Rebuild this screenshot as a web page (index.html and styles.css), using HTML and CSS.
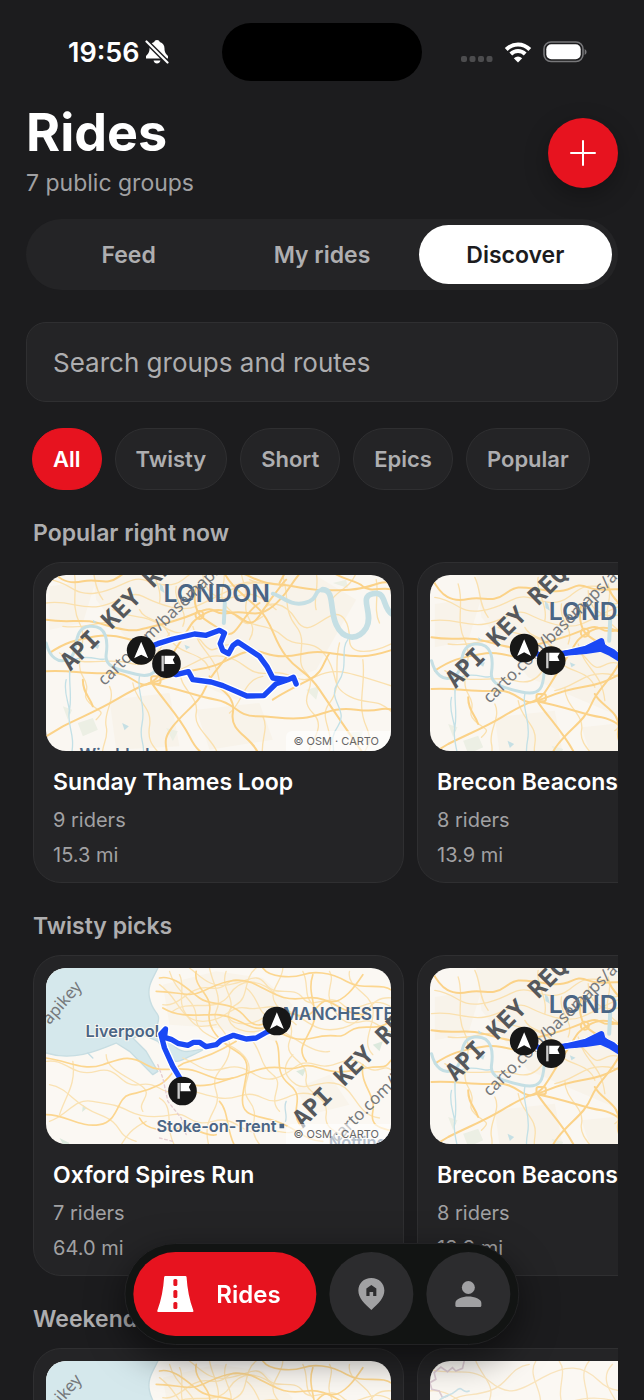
FILE: index.html
```html
<!DOCTYPE html>
<html lang="en">
<head>
<meta charset="utf-8">
<meta name="viewport" content="width=device-width, initial-scale=1">
<title>Rides</title>
<link rel="stylesheet" href="styles.css">
</head>
<body>
<svg class="sprite" aria-hidden="true">
  <defs>
    <g id="start-pin">
      <circle r="43" fill="#171717"/>
      <path d="M0-26 21 24 0 13-21 24Z" fill="#fff"/>
    </g>
    <g id="end-pin">
      <circle r="43" fill="#171717"/>
      <path d="M-15-24h7v47h-7Z" fill="#ccc"/>
      <path d="M-6-24H26L19-12 25 1H-6Z" fill="#fff"/>
    </g>
    <g id="watermark">
      <text class="wm-bold" transform="translate(122 336) rotate(-45)">API KEY REQUIRED</text>
      <text class="wm-thin" transform="translate(225 380) rotate(-44.5)">carto.com/basemaps/apikey</text>
    </g>
    <g id="london" fill="none" stroke-linecap="round" stroke-linejoin="round">
      <rect x="-100" y="-100" width="1400" height="800" fill="#faf7f2"/>
      <g fill="#f8f3ea">
        <path d="M180 -40 520 -60 780 0 980 120 860 330 620 420 340 300 200 120Z"/>
        <path d="M60 80 200 60 160 190 60 210ZM240 420 420 400 450 560 260 570ZM500 450 690 430 730 540 540 570Z"/>
      </g>
      <g fill="#ecefe4">
        <path d="M145 490 190 475 205 510 160 530ZM100 440 128 450 115 480ZM410 505 445 515 430 545ZM830 390 870 380 860 420ZM910 70 950 60 955 85ZM640 250 670 260 650 280ZM950 520 1000 515 990 550Z"/>
      </g>
      <g stroke="#fae0ae" stroke-width="4">
        <path d="M50 130C120 120 150 150 210 140S300 90 340 110 450 160 500 140 640 60 700 70"/>
        <path d="M60 60C130 70 130 110 200 100S300 50 340 60 420 90 460 60 500 20 580 30"/>
        <path d="M130 20C150 80 120 130 150 190S130 300 160 350 150 400 180 430 230 450 200 480"/>
        <path d="M240 380C260 420 220 460 230 500S210 560 220 600M310 370C320 430 370 440 360 500S390 570 400 600"/>
        <path d="M250 150C310 180 340 160 400 200S480 200 520 250 560 240 620 260"/>
        <path d="M420 340C480 330 510 280 580 290S650 350 720 340 800 380 860 350 960 340 1090 380"/>
        <path d="M600 460C640 430 640 360 700 350M450 330C450 390 510 410 500 460S560 540 570 600"/>
        <path d="M620 170C680 210 720 190 760 230S850 230 890 290 900 380 960 410 1040 410 1090 460"/>
        <path d="M690 170C710 110 770 130 800 180S860 190 900 170 960 190 960 240 1030 280 1090 250"/>
        <path d="M760 50C780 110 760 150 800 200S790 300 830 340 800 410 850 460 820 560 840 600"/>
        <path d="M580 20C600 70 550 110 600 150S640 210 700 170M520 40C520 90 560 130 620 110S700 120 740 150"/>
        <path d="M640 0C620 50 660 80 650 130S690 190 660 240M660 60C700 80 720 60 760 80M590 80C630 80 640 60 690 70"/>
        <path d="M930 250C910 320 940 380 900 430S930 520 890 600M980 40C960 90 920 90 900 130"/>
        <path d="M700 470C720 510 690 540 700 600M1000 300C1010 380 980 430 1010 500S990 560 1010 600"/>
        <path d="M100 200C180 210 210 180 250 190M90 280C160 330 230 290 300 310S390 270 420 220"/>
        <path d="M330 150C350 190 400 170 420 230S520 270 540 330M440 80C430 130 480 150 460 200M490 200C510 280 560 280 570 370"/>
        <path d="M180 0C200 40 190 80 220 120M370 0C360 40 400 80 390 130M860 40C870 80 850 120 860 150M1040 60C1050 100 1030 150 1050 190"/>
      </g>
      <g stroke="#fbd288" stroke-width="6">
        <path d="M50 0C80 60 110 75 160 65S230 80 270 50 320 30 400 40 470 10 520 30 600 20 660 50 740 70 790 80 880 95 960 90 1040 60 1090 70"/>
        <path d="M50 180C110 190 140 180 180 185S290 220 330 210 430 190 500 160 540 170 600 160 680 180 730 140 780 70 830 20"/>
        <path d="M50 335C120 330 180 345 240 340S320 380 350 375 430 340 500 330 590 300 640 280 700 290 760 290 830 270 900 280 1000 300 1090 270"/>
        <path d="M50 530 100 500C160 470 210 450 260 420S330 380 360 370 410 310 450 250 480 190 520 165 600 150 640 180 690 160 730 110 750 80 770 60"/>
        <path d="M370 375C400 420 450 470 480 530S520 570 530 600M360 370C460 390 500 410 560 420S620 470 680 470 760 480 820 475 900 440 980 450 1040 440 1090 450"/>
        <path d="M500 80C490 120 500 150 510 165S560 200 590 220 640 160 690 130M580 30C600 80 650 110 690 150S730 240 770 290 830 330 870 390 910 450 1000 580"/>
        <path d="M620 240C600 300 550 330 530 380S470 450 430 500 420 560 410 600M540 350C560 390 620 400 610 460S670 530 690 590"/>
        <path d="M60 280C120 240 150 240 200 230S300 240 340 250M160 360C160 400 180 410 190 440M750 70C760 50 780 20 790-20"/>
        <path d="M900 30C930 60 980 60 1000 80S1060 80 1090 90M730 420C760 400 800 380 840 360S880 310 900 280"/>
        <circle cx="510" cy="166" r="12"/><rect x="365" y="350" width="28" height="22" rx="6"/>
      </g>
      <g stroke="#c3e0e6" stroke-width="4">
        <path d="M128 300C110 340 130 400 120 450S140 520 125 590M330 350C320 400 350 430 338 490S350 540 340 600M955 240C930 270 960 320 925 370S960 450 925 500 930 560 900 600M110 360C100 400 120 430 120 460"/>
        <path d="M135 300C180 280 220 310 230 295"/>
      </g>
      <g stroke="#c5dfe4">
        <path stroke-width="9" d="M50 250C60 290 85 315 118 298S125 205 180 200 235 250 230 285 260 330 320 344 385 325 388 285"/>
        <path stroke-width="12" d="M583 190 586 130M730 102C760 110 780 140 825 130S850 92 880 90"/>
        <path stroke-width="17" d="M880 90C915 90 900 150 920 195S985 245 1010 205 985 110 1030 102 1055 145 1090 165"/>
      </g>
      <path fill="#c5dfe4" d="M278 490 298 500 285 512ZM465 255 482 262 470 270ZM190 258 210 255 205 268ZM190 180 202 188 192 190ZM390 70 400 80 405 100 392 92Z"/>
      <text class="city" x="402" y="128">LONDON</text>
      <text class="town" x="150" y="602">Wimbledon</text>
      <use href="#watermark"/>
    </g>
    <g id="north-west" fill="none" stroke-linecap="round" stroke-linejoin="round">
      <rect x="0" y="0" width="1200" height="700" fill="#fbf8f3"/>
      <g fill="#f9f4eb"><path d="M400 90 560 50 700 70 790 150 740 260 560 220 420 210ZM800 400 900 360 960 450 840 480Z"/></g>
      <path d="M0 0H400C385 60 350 80 360 130S395 170 385 205 400 240 430 270 480 290 510 285 490 300 460 315 430 310 410 290L385 260 340 240 310 250 350 290 385 350 370 360 300 290 260 265C200 290 130 320 50 295L0 300Z" fill="#d5e8ec" stroke="#c7dde2" stroke-width="4"/>
      <path d="M90 550 120 565 110 585ZM160 450 172 460 158 472ZM800 350 830 340 820 365ZM1030 270 1060 260 1050 290Z" fill="#dce9dd"/>
      <g stroke="#fae2b3" stroke-width="4">
        <path d="M390 90C450 130 450 200 520 200S600 150 650 160 720 140 780 170 860 240 940 220 1010 120 1090 130"/>
        <path d="M420 50C440 120 500 130 500 190S590 250 640 300 620 390 660 440 640 520 700 580"/>
        <path d="M480 40C520 70 540 100 600 90S680 50 710 90 790 90 820 130 900 110 940 150 1020 110 1090 160"/>
        <path d="M540 40C550 90 580 130 560 170S610 230 600 290 540 350 560 410 510 480 540 580"/>
        <path d="M680 40C640 70 660 130 620 150S590 220 650 230 710 200 760 230 860 300 900 290"/>
        <path d="M760 40C760 80 710 110 740 150S800 210 780 260 840 320 830 370 900 420 890 480 960 530 970 580"/>
        <path d="M50 320C110 310 130 370 200 350S270 400 330 390 390 420 440 410 510 420 570 430 640 400 700 430 780 400 850 420"/>
        <path d="M60 500C120 480 130 430 190 440S260 450 300 470 380 490 430 480 480 520 550 500 630 540 690 530 770 550 820 520"/>
        <path d="M130 320C140 390 110 420 90 480M230 300C230 340 280 360 330 390S320 440 340 470M390 430C440 460 400 520 440 580"/>
        <path d="M460 310C510 330 520 360 590 340S680 390 740 370 800 310 860 330 950 290 1000 330 1060 320 1090 350"/>
        <path d="M900 50C920 80 880 110 910 160S960 210 1000 200 1070 240 1090 230M960 50C950 100 1020 110 1030 160S990 260 1030 300"/>
        <path d="M670 260C700 300 690 330 730 360S710 430 750 470M790 300C750 340 770 370 800 390S880 370 930 390 980 480 1050 490"/>
        <path d="M400 150C450 160 480 90 540 100S590 60 640 80M430 170C480 130 560 180 600 120S700 80 740 120"/>
        <path d="M60 390C120 400 130 450 210 480S250 540 320 560M350 500C310 520 290 540 270 580"/>
        <path d="M450 60C470 100 440 140 470 180S500 220 560 210M590 50C570 100 620 130 600 170S660 220 700 190M650 100C690 130 680 170 720 190S770 180 800 210M820 50C840 90 820 120 850 150"/>
      </g>
      <g stroke="#fcd68f" stroke-width="5">
        <path d="M390 70C430 60 470 100 510 130S600 130 650 190 740 160 800 180 860 130 900 140 980 90 1000 60"/>
        <path d="M400 160C450 190 500 180 560 180S660 230 700 220 770 270 850 250 920 260 960 230 1050 240 1090 190"/>
        <path d="M380 110C440 110 480 130 520 110S620 60 680 90 760 140 830 130 940 180 1000 180"/>
        <path d="M500 50C490 100 550 120 540 170S570 260 620 290 650 350 640 420 680 480 740 500 830 560 880 560"/>
        <path d="M50 310C120 320 160 350 220 330S300 300 350 330 440 330 500 350 560 380 610 370"/>
        <path d="M50 480C110 480 150 520 210 510S260 430 300 420 350 410 390 390 430 330 480 320 570 290 620 260"/>
        <path d="M480 390C540 400 570 380 610 370S700 330 760 340 810 320 870 340 950 350 1010 340 1060 350 1090 310"/>
        <path d="M740 260C760 300 730 350 780 390S780 460 810 510M850 60C830 120 870 160 850 210S800 280 830 320"/>
        <path d="M700 40C720 70 790 70 820 60S900 50 950 80 1060 80 1090 110M570 440C600 470 590 540 620 580"/>
        <path d="M1000 330C990 390 1040 420 1030 470S1060 520 1090 530M330 490C350 530 410 530 450 520S530 550 560 540"/>
      </g>
      <path d="M385 330 400 370 415 440 455 490 470 540M390 550 430 560" stroke="#e5cdd2" stroke-width="4" stroke-dasharray="8 8"/>
      <path d="M175 295 190 310M770 440C760 460 775 480 768 500" stroke="#c4dde5" stroke-width="4"/>
      <text class="town halo" x="168" y="247">Liverpool</text>
      <text class="town halo" x="381" y="532">Stoke-on-Trent</text>
      <path d="M750 507h14v14h-14Z" fill="#4a6585"/>
      <text class="city small" x="760" y="195">MANCHESTER</text>
      <text class="town halo" x="898" y="580">Nottingham</text>
      <use href="#watermark" x="698" y="186"/>
      <text class="wm-thin" transform="translate(60 212) rotate(-49)">apikey</text>
    </g>
    <g id="midlands" fill="none" stroke-linecap="round">
      <rect x="0" y="0" width="1200" height="700" fill="#fbf8f3"/>
      <g stroke="#f9e4bd" stroke-width="4">
        <path d="M50 60C120 90 180 50 240 100S330 130 400 90 520 50 570 100 690 130 760 90"/>
        <path d="M100 180C150 130 180 150 240 130S300 60 360 50M200 40C220 90 260 110 240 160S290 200 300 240"/>
        <path d="M380 40C350 90 410 130 390 190M450 40C480 80 430 130 470 190M540 40C500 90 550 130 530 190"/>
        <path d="M60 130C130 120 160 190 230 180S340 150 400 170 500 130 620 160M610 50C570 90 600 130 640 190"/>
      </g>
      <path d="M165 40 160 62 140 70 130 60 115 72 95 58 75 75 80 95 62 105 68 125 90 130 100 150 115 145" stroke="#dccbd3" stroke-width="5"/>
      <path d="M85 190C80 140 120 150 140 130S160 140 180 130" stroke="#cce2e8" stroke-width="5"/>
    </g>
    <g id="brecon-map">
      <use href="#london" x="17" y="53"/>
      <g class="route">
        <path class="casing" d="M345 263 400 290 470 280 530 268 575 248 582 265 610 277 640 300 700 320"/>
        <path class="line" d="M345 263 400 290 470 280 530 266 577 243 582 262 610 275 640 300 700 320"/>
        <path class="line" d="M470 280 530 275 575 268 605 282 650 310"/>
        <path class="line" d="M500 277 545 268 578 256 600 275"/>
      </g>
      <use href="#start-pin" x="345" y="265"/>
      <use href="#end-pin" x="426" y="303"/>
    </g>
  </defs>
</svg>

<div class="app">
  <div class="status">
    <div class="status-left">
      <span>19:56</span>
      <svg width="24" height="24" viewBox="0 0 24 24" role="img" aria-label="Silent">
        <path fill="#fff" d="M12 0c1.500 0 2.500.8 2.800 2 3.200 1 4.700 3.500 4.700 6.500 0 4 1.500 5.500 3.500 7.500v2.500H1V16c2-2 3.500-3.500 3.500-7.500 0-3 1.500-5.500 4.700-6.500C9.500.8 10.500 0 12 0ZM8.500 20.500h7c-.5 1.900-1.800 3-3.500 3s-3-1.100-3.500-3Z"/>
        <path d="M0 0 24 24" stroke="#1c1c1e" stroke-width="5"/>
        <path d="M1.500 1.500 22.500 22.500" stroke="#fff" stroke-width="2.200" stroke-linecap="round"/>
      </svg>
    </div>
    <div class="island"></div>
    <div class="status-right">
      <svg width="32" height="24" viewBox="0 0 32 24" aria-hidden="true" fill="#4c4c4e"><rect y="16" width="6" height="6" rx="2"/><rect x="8.500" y="16" width="6" height="6" rx="2"/><rect x="17" y="16" width="6" height="6" rx="2"/><rect x="25.500" y="16" width="6" height="6" rx="2"/></svg>
      <svg width="28" height="24" viewBox="0 0 28 24" role="img" aria-label="Wi-Fi" fill="none" stroke="#fff" stroke-width="4"><path d="M2.200 9.500C9 2.800 19 2.800 25.800 9.500M6.800 14C11 10 17 10 21.200 14"/><path d="M14 22.500 9.800 18.300Q14 14.800 18.200 18.300Z" fill="#fff" stroke="none"/></svg>
      <svg width="44" height="24" viewBox="0 0 44 24" role="img" aria-label="Battery"><rect x="1" y="2" width="39" height="19.500" rx="7" fill="none" stroke="#77777a" stroke-width="1.600"/><rect x="3.300" y="4.300" width="34.400" height="15" rx="5" fill="#fff"/><path d="M41.600 9q2 1 2 3t-2 3Z" fill="#77777a"/></svg>
    </div>
  </div>

  <header class="header">
    <div>
      <h1>Rides</h1>
      <p>7 public groups</p>
    </div>
    <button class="add" aria-label="New group"><svg width="28" height="28" viewBox="0 0 28 28" stroke="#fff" stroke-width="2" stroke-linecap="round"><path d="M14 2V26M2 14H26"/></svg></button>
  </header>

  <div class="tabs">
    <button>Feed</button>
    <button>My rides</button>
    <button class="active">Discover</button>
  </div>

  <input class="search" type="search" placeholder="Search groups and routes" aria-label="Search groups and routes">

  <div class="chips">
    <button class="active">All</button>
    <button>Twisty</button>
    <button>Short</button>
    <button>Epics</button>
    <button>Popular</button>
  </div>

  <main class="sections">
    <section>
      <h2>Popular right now</h2>
      <div class="row">
        <article class="card">
          <div class="map">
            <svg viewBox="48 46 1038 528" preserveAspectRatio="xMidYMid slice" aria-hidden="true">
              <use href="#london"/>
              <g class="route">
                <path class="casing" d="M335 272 385 252 430 238 495 223 530 227 570 212 585 220 572 252 580 273 597 282 610 258 625 247 690 290 712 320 730 355 775 360 792 353 800 373M775 360 740 372 703 408 652 409 580 378 545 367 490 360 477 336 440 345 411 335"/>
                <path class="line" d="M335 272 385 252 430 238 495 223 530 227 570 212 585 220 572 252 580 273 597 282 610 258 625 247 690 290 712 320 730 355 775 360 792 353 800 373M775 360 740 372 703 408 652 409 580 378 545 367 490 360 477 336 440 345 411 335"/>
              </g>
              <use href="#start-pin" x="335" y="272"/>
              <use href="#end-pin" x="411" y="312"/>
            </svg>
            <span class="credit">© OSM · CARTO</span>
          </div>
          <div class="info"><h3>Sunday Thames Loop</h3><p>9 riders</p><p>15.3 mi</p></div>
        </article>
        <article class="card">
          <div class="map"><svg viewBox="61 46 1038 528" preserveAspectRatio="xMidYMid slice" aria-hidden="true"><use href="#brecon-map"/></svg></div>
          <div class="info"><h3>Brecon Beacons</h3><p>8 riders</p><p>13.9 mi</p></div>
        </article>
      </div>
    </section>

    <section>
      <h2>Twisty picks</h2>
      <div class="row">
        <article class="card">
          <div class="map">
            <svg viewBox="48 40 1038 528" preserveAspectRatio="xMidYMid slice" aria-hidden="true">
              <use href="#north-west"/>
              <g class="route">
                <path class="casing" d="M742 220 712 232 680 250 650 253 612 242 575 257 560 270 530 276 510 263 492 263 475 272 445 266 425 254 405 248 408 223 394 238 405 280 430 335 460 385"/>
                <path class="line" d="M742 220 712 232 680 250 650 253 612 242 575 257 560 270 530 276 510 263 492 263 475 272 445 266 425 254 405 248 408 223 394 238 405 280 430 335 460 385"/>
              </g>
              <use href="#start-pin" x="742" y="199"/>
              <use href="#end-pin" x="459" y="409"/>
            </svg>
            <span class="credit">© OSM · CARTO</span>
          </div>
          <div class="info"><h3>Oxford Spires Run</h3><p>7 riders</p><p>64.0 mi</p></div>
        </article>
        <article class="card">
          <div class="map"><svg viewBox="61 46 1038 528" preserveAspectRatio="xMidYMid slice" aria-hidden="true"><use href="#brecon-map"/></svg></div>
          <div class="info"><h3>Brecon Beacons</h3><p>8 riders</p><p>13.9 mi</p></div>
        </article>
      </div>
    </section>

    <section>
      <h2>Weekend</h2>
      <div class="row">
        <article class="card">
          <div class="map"><svg viewBox="48 40 1038 528" preserveAspectRatio="xMidYMid slice" aria-hidden="true"><use href="#north-west"/></svg></div>
        </article>
        <article class="card">
          <div class="map"><svg viewBox="61 40 1038 528" preserveAspectRatio="xMidYMid slice" aria-hidden="true"><use href="#midlands"/></svg></div>
        </article>
      </div>
    </section>
  </main>

  <nav class="dock">
    <button class="active">
      <svg width="38" height="38" viewBox="0 0 38 38" aria-hidden="true"><path d="M9 1H29Q30 1 30.200 2C31 14 33 25 37 35.500Q37.500 37 36 37H2Q.5 37 1 35.500C5 25 7 14 7.800 2Q8 1 9 1Z" fill="#fff"/><g fill="#e7131f"><rect x="17" y="4" width="4" height="7" rx="1.500"/><rect x="17" y="15" width="4" height="8" rx="1.500"/><rect x="17" y="27" width="4" height="7" rx="1.500"/></g></svg>
      <span>Rides</span>
    </button>
    <button class="round" aria-label="Places"><svg width="36" height="36" viewBox="0 0 36 36" aria-hidden="true"><path d="M18 2C10.500 2 5 7.300 5 14.500 5 22 11 27.500 18 34 25 27.500 31 22 31 14.500 31 7.300 25.500 2 18 2Z" fill="#a1a1a3"/><path d="M13 20V12.500L18 9 23 12.500V20H19.800V16H16.200V20Z" fill="#2c2c2e"/></svg></button>
    <button class="round" aria-label="Profile"><svg width="36" height="36" viewBox="0 0 36 36" fill="#a1a1a3" aria-hidden="true"><circle cx="18" cy="11.500" r="6.500"/><path d="M5 29.500V27C5 23 12 20.500 18 20.500S31 23 31 27V29.500Q31 31 29.500 31H6.500Q5 31 5 29.500Z"/></svg></button>
  </nav>
</div>
</body>
</html>
```
FILE: styles.css
```css
* { box-sizing: border-box; margin: 0; }

body {
  background: #1c1c1e;
  color: #fff;
  font-family: Inter, "Liberation Sans", sans-serif;
}

button, input { font: inherit; color: inherit; border: 0; }
button { cursor: pointer; }
svg { display: block; flex: none; }
.sprite { position: absolute; width: 0; height: 0; }

.app {
  height: 100vh;
  overflow: hidden;
  padding: 23px 26px 0;
}

.status {
  display: grid;
  grid-template-columns: 1fr 200px 1fr;
  align-items: center;
}
.status-left {
  display: flex;
  align-items: center;
  gap: 5px;
  padding-left: 42px;
  font-size: 27px;
  font-weight: 600;
}
.status-right {
  display: flex;
  align-items: center;
  justify-content: flex-end;
  gap: 11px;
  padding-right: 31px;
}
.island { height: 58px; border-radius: 29px; background: #000; }

.header {
  display: flex;
  justify-content: space-between;
  margin: 21px 0 22px;
}
.header h1 { font-size: 52px; line-height: 62px; font-weight: 700; }
.header p { margin-top: 5px; font-size: 23px; line-height: 28px; color: #a1a1a3; }
.add {
  display: grid;
  place-items: center;
  width: 70px;
  height: 70px;
  margin-top: 16px;
  padding: 0;
  border-radius: 50%;
  background: #e7131f;
  box-shadow: 0 8px 24px rgba(0, 0, 0, .3);
}

.tabs {
  display: grid;
  grid-template-columns: repeat(3, 1fr);
  padding: 6px;
  border-radius: 36px;
  background: #242426;
}
.tabs button {
  height: 59px;
  border-radius: 30px;
  background: none;
  color: #aeaeb0;
  font-size: 23px;
  font-weight: 600;
}
.tabs .active { background: #fff; color: #1c1c1e; }

.search {
  display: block;
  width: 100%;
  height: 80px;
  margin: 32px 0 26px;
  padding: 0 26px;
  border: 1px solid #2f2f31;
  border-radius: 20px;
  background: #242426;
  font-size: 26px;
  appearance: none;
}
.search::placeholder { color: #aeaeb0; opacity: 1; }

.chips { display: flex; gap: 13px; padding-left: 6px; }
.chips button {
  height: 62px;
  padding: 0 20px;
  border: 1px solid #2f2f31;
  border-radius: 31px;
  background: #242426;
  color: #aeaeb0;
  font-size: 22px;
  font-weight: 600;
}
.chips .active { background: #e7131f; border-color: #e7131f; color: #fff; }

.sections { display: grid; gap: 29px; margin-top: 29px; }
.sections section { min-width: 0; }
.sections h2 {
  margin-bottom: 15px;
  padding-left: 7px;
  color: #aeaeb0;
  font-size: 23px;
  line-height: 28px;
  font-weight: 600;
}
.row { display: flex; gap: 13px; padding-left: 7px; overflow: hidden; }

.card {
  flex: none;
  width: 371px;
  padding: 12px 12px 0;
  border: 1px solid #2f2f31;
  border-radius: 28px;
  background: #242426;
}
.map { position: relative; height: 176px; border-radius: 20px; overflow: hidden; }
.map svg { width: 100%; height: 100%; }
.credit {
  position: absolute;
  right: 0;
  bottom: 0;
  padding: 2px 12px 2px 7px;
  border-radius: 6px 0 0 0;
  background: rgba(255, 255, 255, .6);
  color: #666;
  font-size: 11px;
  line-height: 16px;
}
.info { padding: 16px 7px 9px; white-space: nowrap; }
.info h3 { margin-bottom: 6px; font-size: 23px; line-height: 30px; font-weight: 600; }
.info p { color: #a1a1a3; font-size: 20px; line-height: 35px; }

.city { fill: #4a6585; font: 600 74px Inter, sans-serif; stroke: none; }
.city.small { font-size: 52px; }
.town { fill: #4a6585; font: 600 49px Inter, sans-serif; }
.halo { stroke: #fbf8f3; stroke-width: 6px; paint-order: stroke; }
.wm-bold { fill: #55585c; font: 700 73px "DejaVu Sans Mono", monospace; }
.wm-thin { fill: #75787b; font: 400 50px "Noto Sans", sans-serif; }
.route { fill: none; stroke-linecap: round; stroke-linejoin: round; }
.casing { stroke: #fff; stroke-width: 24px; }
.line { stroke: #1a48f5; stroke-width: 16px; }

.dock {
  position: fixed;
  bottom: 55px;
  left: 50%;
  transform: translateX(-50%);
  display: flex;
  gap: 13px;
  padding: 8px;
  border: 1px solid #222224;
  border-radius: 51px;
  background: #121413;
  box-shadow: 0 12px 36px rgba(0, 0, 0, .5);
}
.dock button {
  display: flex;
  align-items: center;
  justify-content: center;
  height: 84px;
  border-radius: 42px;
}
.dock .active {
  gap: 22px;
  padding: 0 36px 0 23px;
  background: #e7131f;
  font-size: 24px;
  font-weight: 600;
}
.dock .round { width: 84px; padding: 0; background: #2c2c2e; }
```
